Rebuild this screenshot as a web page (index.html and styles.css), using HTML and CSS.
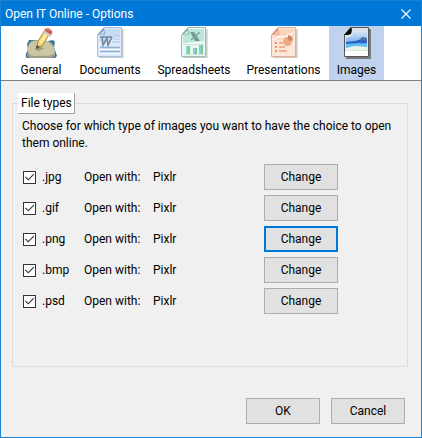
FILE: index.html
```html
<!DOCTYPE html>
<html lang="en">
<head>
<meta charset="utf-8">
<title>Open IT Online - Options</title>
<link rel="stylesheet" href="styles.css">
</head>
<body>
<main class="dialog">
  <header class="titlebar">
    <h1 class="title">Open IT Online - Options</h1>
    <button class="close" type="button" aria-label="Close">
      <svg width="10" height="10" viewBox="0 0 10 10"><path d="M.5 .5l9 9M9.500 .5l-9 9" stroke="#fff" stroke-width="1.100"/></svg>
    </button>
  </header>
  <nav class="tabs">
    <button class="tab tab-general" type="button">
      <svg class="icon" viewBox="0 0 32 32">
        <path d="M4 13h8l1 8-8 10H2q-2-1-1-4l2-5-1-5zM23 14l5-1 2 2-1 5 3 9-2 2h-4l-6-9z" fill="#437990"/>
        <path d="M8 14q8-2 16 1c4 2 5 6 6 10l-1 3-5 1H6l-3-3c-1-5 1-11 5-12z" fill="#cbc7a4" stroke="#b3b092" stroke-width=".6"/>
        <path d="M3 26l3 3h18l6-2v2l-3 2H5l-3-2z" fill="#a19e87"/>
        <path d="M10 22l7-2 2 2-6 2z" fill="#9d9b82"/>
        <path d="M11 22l2-8 7-11 5 3-7 12z" fill="#f3d777" stroke="#8f7541" stroke-width=".8"/>
        <path d="M15 15l7-11 2 1-8 12z" fill="#fff0ae"/>
        <path d="M11 22l1-4 3 2z" fill="#4b493f"/>
        <path d="M18 5l2-3q3-2 5 0l2 2q1 2-1 4l-1 1z" fill="#c75f52"/>
        <path d="M18 5l1-2 7 5-1 2z" fill="#d1cbc3"/>
        <path d="M21 2q3-1 4 2" fill="none" stroke="#f4a69b"/>
      </svg>
      <span>General</span>
    </button>
    <button class="tab tab-documents" type="button">
      <svg class="icon" viewBox="0 0 32 32">
        <path d="M28 2h1.500v29H5v-1h23z" fill="#c8ccd0"/>
        <path d="M10 .5h17.500v29h-24V8z" fill="#dceafa" stroke="#a5bedd"/>
        <path d="M11 2h15v7L5 15V9z" fill="#c6dcf5"/>
        <path d="M3.500 8L10 .5l1 7z" fill="#7c9cc1"/>
        <path d="M5 8l5-5v4z" fill="#c4d7ec"/>
        <path d="M6 10h5M11 10h4M15 10h3M8 10l1 8 4-7 1 7 4-8" fill="none" stroke="#75879e" stroke-width="1.600"/>
        <path d="M20 9h6M19 12h7M18 15h8" stroke="#a9c6e8" stroke-width="1.200"/>
        <path d="M6 20.500h20M6 24.500h20" stroke="#8caed9" stroke-width="1.500"/>
        <path d="M5 22.500h21M6 26.500h20" stroke="#f8fbff"/>
      </svg>
      <span>Documents</span>
    </button>
    <button class="tab tab-spreadsheets" type="button">
      <svg class="icon" viewBox="0 0 32 32">
        <path d="M28 2h1.500v29H5v-1h23z" fill="#c6cac8"/>
        <path d="M10 .5h17.500v29h-24V8z" fill="#e8f8f3" stroke="#9ebdb4"/>
        <path d="M11 2h15v12L5 16V9z" fill="#bce5dc"/>
        <path d="M3.500 8L10 .5l1 7z" fill="#86ada2"/>
        <path d="M5 8l5-5v4z" fill="#c9e4dc"/>
        <path d="M12 5h4l6 9h-5z" fill="#729b92"/>
        <path d="M22 5l-9 8" stroke="#80aaa1" stroke-width="1.500"/>
        <path d="M6 17.500h20M6 27.500h20" stroke="#cfe5df"/>
        <path d="M8 19h4v8H8zM15 21h4v6h-4zM21 18h4v9h-4z" fill="#8bcfe0"/>
        <path d="M10 19h2v8h-2zM17 21h2v6h-2zM23 18h2v9h-2z" fill="#79cf80"/>
      </svg>
      <span>Spreadsheets</span>
    </button>
    <button class="tab tab-presentations" type="button">
      <svg class="icon" viewBox="0 0 32 32">
        <path d="M28 2h1.500v29H5v-1h23z" fill="#d1c6c1"/>
        <path d="M10 .5h17.500v29h-24V8z" fill="#fde5d8" stroke="#dfaf9b"/>
        <path d="M11 2h15v8L5 14V9z" fill="#fcd4be"/>
        <path d="M3.500 8L10 .5l1 7z" fill="#d68f75"/>
        <path d="M5 8l5-5v4z" fill="#f7c9b5"/>
        <path d="M5 13q6-5 12-3l8-4" fill="none" stroke="#fff3ea" stroke-width="2"/>
        <circle cx="19.500" cy="14.500" r="4.500" fill="#efaa88"/>
        <path d="M20 13.500V8q5 1 5 5.500z" fill="#cf8667"/>
        <path d="M7 15h2v2H7zM7 19h2v2H7zM7 23h2v2H7z" fill="#e8926c"/>
        <path d="M11 16h4M11 20h6M11 24h8" stroke="#e8a07f" stroke-width="1.500"/>
      </svg>
      <span>Presentations</span>
    </button>
    <button class="tab tab-images selected" type="button" aria-current="page">
      <svg class="icon" viewBox="0 0 32 32">
        <defs>
          <linearGradient id="sky" x1="0" y1="0" x2="0" y2="1"><stop offset="0" stop-color="#d8e8fb"/><stop offset="1" stop-color="#4c94ea"/></linearGradient>
        </defs>
        <path d="M28 2h2v30H5v-2h23z" fill="#777a7c"/>
        <path d="M10 .5h17.500v29h-24V8z" fill="#fff" stroke="#555"/>
        <path d="M10 1h17v23H4V8z" fill="#dce2e5"/>
        <path d="M5 11l6-2 2-5h13v18H5z" fill="url(#sky)"/>
        <path d="M5 15l9-1 7-2h5v4l-8 1H5z" fill="#2862c3"/>
        <path d="M18 12l4-2 4 1v3z" fill="#50749f"/>
        <path d="M5 17l13-1 8 1v4H5z" fill="#62bdf0"/>
        <path d="M5 21l9-2 12 1v3H5z" fill="#edf5e7"/>
        <path d="M3 8L10 0l1 3-1 4-3 1z" fill="#080808"/>
        <path d="M4 24h23v5H4z" fill="#fff"/>
      </svg>
      <span>Images</span>
    </button>
  </nav>
  <form class="content">
    <fieldset class="group">
      <legend>File types</legend>
      <p class="intro">Choose for which type of images you want to have the choice to open them online.</p>
      <div class="types">
        <div class="row"><label class="type"><input type="checkbox" checked>.jpg</label><span>Open with:</span><span>Pixlr</span><button class="btn" type="button">Change</button></div>
        <div class="row"><label class="type"><input type="checkbox" checked>.gif</label><span>Open with:</span><span>Pixlr</span><button class="btn" type="button">Change</button></div>
        <div class="row"><label class="type"><input type="checkbox" checked>.png</label><span>Open with:</span><span>Pixlr</span><button class="btn active" type="button">Change</button></div>
        <div class="row"><label class="type"><input type="checkbox" checked>.bmp</label><span>Open with:</span><span>Pixlr</span><button class="btn" type="button">Change</button></div>
        <div class="row"><label class="type"><input type="checkbox" checked>.psd</label><span>Open with:</span><span>Pixlr</span><button class="btn" type="button">Change</button></div>
      </div>
    </fieldset>
    <footer class="actions">
      <button class="btn" type="button">OK</button>
      <button class="btn" type="button">Cancel</button>
    </footer>
  </form>
</main>
</body>
</html>
```
FILE: styles.css
```css
* {
  box-sizing: border-box;
}

body {
  margin: 0;
  color: #000;
  font: 12px/16px Roboto, "Noto Sans", sans-serif;
}

button {
  color: inherit;
  font: inherit;
}

.dialog {
  display: flex;
  flex-direction: column;
  min-height: 100vh;
  border: 1px solid #1883d7;
  background: #f0f0f0;
}

.titlebar {
  display: flex;
  align-items: center;
  justify-content: space-between;
  height: 25px;
  padding: 0 10px 0 4px;
  background: #0078d7;
  color: #fff;
}

.title {
  margin: 0;
  font-size: 12px;
  font-weight: 400;
}

.close {
  display: flex;
  padding: 0;
  border: 0;
  background: none;
}

.tabs {
  display: flex;
  height: 55px;
  padding-left: 11px;
  border-bottom: 1px solid #808080;
  background: #fff;
}

.tab {
  display: flex;
  flex-direction: column;
  align-items: center;
  gap: 3px;
  padding: 1px 0 0;
  border: 0;
  background: none;
  white-space: nowrap;
}

.tab-general { width: 58px; }
.tab-documents { width: 80px; }
.tab-spreadsheets { width: 88px; }
.tab-presentations { width: 91px; }
.tab-images { width: 55px; }

.tab.selected {
  background: #c1d2ee;
}

.icon {
  width: 32px;
  height: 32px;
}

.content {
  display: flex;
  flex: 1;
  flex-direction: column;
  padding: 12px 13px 13px 11px;
}

.group {
  flex: 1;
  min-width: 0;
  margin: 0;
  padding: 4px 9px;
  border: 1px solid #dcdcdc;
}

legend {
  margin-left: -4px;
  padding: 2px 2px 2px 3px;
  border-right: 1px solid #a0a0a0;
  border-bottom: 1px solid #a0a0a0;
  background: #fff;
}

.intro {
  margin: 0 0 12px;
  line-height: 17px;
}

.types {
  display: grid;
  gap: 5px;
}

.row {
  display: grid;
  grid-template-columns: 62px 69px 111px 74px;
  align-items: center;
}

.type {
  display: flex;
  align-items: center;
  gap: 6px;
}

input[type="checkbox"] {
  width: 13px;
  height: 13px;
  margin: 0 0 0 1px;
  border: 1px solid #333;
  background: #fff;
  appearance: none;
}

input[type="checkbox"]:checked::before {
  display: block;
  width: 11px;
  height: 11px;
  background: #333;
  clip-path: polygon(9% 52%, 16% 45%, 39% 68%, 86% 20%, 93% 27%, 39% 82%);
  content: "";
}

.btn {
  width: 74px;
  height: 26px;
  padding: 0;
  border: 1px solid #adadad;
  background: #e1e1e1;
}

.btn.active {
  border: 2px solid #0078d7;
}

.actions {
  display: flex;
  justify-content: flex-end;
  gap: 11px;
  padding: 31px 3px 0 0;
}
```
